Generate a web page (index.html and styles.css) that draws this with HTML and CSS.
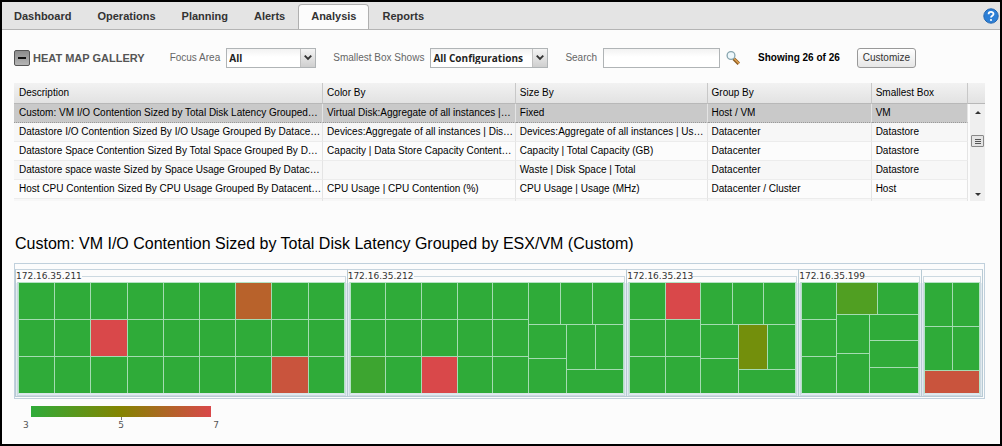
FILE: index.html
```html
<!DOCTYPE html>
<html lang="en">
<head>
<meta charset="utf-8">
<title>Heat Map Gallery</title>
<link rel="stylesheet" href="styles.css">
</head>
<body>
<div class="app">
  <header class="topbar">
    <nav class="tabs">
      <a class="tab" href="#">Dashboard</a>
      <a class="tab" href="#">Operations</a>
      <a class="tab" href="#">Planning</a>
      <a class="tab" href="#">Alerts</a>
      <a class="tab active" href="#">Analysis</a>
      <a class="tab" href="#">Reports</a>
    </nav>
    <button class="icon-btn" type="button" aria-label="Help">
      <svg width="16" height="16" viewBox="0 0 16 16">
        <circle cx="8" cy="8" r="7.2" fill="#2c7fd6" stroke="#2567b0"/>
        <path d="M5.6 6.2C5.6 3.2 10.5 3.2 10.5 6C10.5 7.8 8 7.700 8 9.600" fill="none" stroke="#fff" stroke-width="1.800"/>
        <circle cx="8" cy="12" r="1.100" fill="#fff"/>
      </svg>
    </button>
  </header>

  <main class="content">
    <form class="toolbar">
      <div class="heading">
        <button class="collapse" type="button" aria-label="Collapse gallery"><span class="minus"></span></button>
        <h1 class="gallery-title">HEAT MAP GALLERY</h1>
      </div>
      <div class="field">
        <label for="focus">Focus Area</label>
        <span class="combo combo-small">
          <select id="focus"><option>All</option></select>
          <svg class="arrow" width="15" height="18" viewBox="0 0 15 18"><path d="M4 6.500L7.500 10L11 6.500" fill="none" stroke="#333" stroke-width="2"/></svg>
        </span>
      </div>
      <div class="field">
        <label for="box">Smallest Box Shows</label>
        <span class="combo combo-large">
          <select id="box"><option>All Configurations</option></select>
          <svg class="arrow" width="15" height="18" viewBox="0 0 15 18"><path d="M4 6.500L7.500 10L11 6.500" fill="none" stroke="#333" stroke-width="2"/></svg>
        </span>
      </div>
      <div class="field">
        <label for="search">Search</label>
        <input id="search" class="search" type="text">
        <button class="icon-btn" type="button" aria-label="Run search">
          <svg width="15" height="16" viewBox="0 0 15 16">
            <path d="M7.500 8.500L12.800 13.800" stroke="#8a5a20" stroke-width="3.400"/>
            <path d="M8 8.500L13 13.500" stroke="#e0a050" stroke-width="1.600"/>
            <circle cx="5" cy="5.500" r="3.900" fill="#eef8fc" stroke="#86a4ae" stroke-width="1.300"/>
          </svg>
        </button>
      </div>
      <strong class="count">Showing 26 of 26</strong>
      <button class="customize" type="button">Customize</button>
    </form>

    <div class="grid-panel">
      <div class="grid-main">
      <table class="gallery">
        <colgroup><col class="c-desc"><col class="c-color"><col class="c-size"><col class="c-group"><col class="c-box"></colgroup>
        <thead>
          <tr><th>Description</th><th>Color By</th><th>Size By</th><th>Group By</th><th>Smallest Box</th></tr>
        </thead>
        <tbody>
          <tr class="selected"><td>Custom: VM I/O Contention Sized by Total Disk Latency Grouped…</td><td>Virtual Disk:Aggregate of all instances |…</td><td>Fixed</td><td>Host / VM</td><td>VM</td></tr>
          <tr><td>Datastore I/O Contention Sized By I/O Usage Grouped By Datace…</td><td>Devices:Aggregate of all instances | Dis…</td><td>Devices:Aggregate of all instances | Us…</td><td>Datacenter</td><td>Datastore</td></tr>
          <tr><td>Datastore Space Contention Sized By Total Space Grouped By D…</td><td>Capacity | Data Store Capacity Content…</td><td>Capacity | Total Capacity (GB)</td><td>Datacenter</td><td>Datastore</td></tr>
          <tr><td>Datastore space waste Sized by Space Usage Grouped By Datac…</td><td></td><td>Waste | Disk Space | Total</td><td>Datacenter</td><td>Datastore</td></tr>
          <tr><td>Host CPU Contention Sized By CPU Usage Grouped By Datacent…</td><td>CPU Usage | CPU Contention (%)</td><td>CPU Usage | Usage (MHz)</td><td>Datacenter / Cluster</td><td>Host</td></tr>
          <tr><td></td><td></td><td></td><td></td><td></td></tr>
        </tbody>
      </table>
      </div>
      <div class="side">
        <div class="side-head"></div>
        <div class="track">
          <svg width="6" height="3" viewBox="0 0 6 3"><path d="M0 3L3 0L6 3Z" fill="#333"/></svg>
          <span class="thumb"><i></i><i></i><i></i></span>
          <svg class="down" width="6" height="3" viewBox="0 0 6 3"><path d="M0 0L3 3L6 0Z" fill="#333"/></svg>
        </div>
      </div>
    </div>

    <h2 class="map-title">Custom: VM I/O Contention Sized by Total Disk Latency Grouped by ESX/VM (Custom)</h2>

    <section class="heatmap">
      <div class="host">
        <fieldset>
          <legend>172.16.35.211</legend>
          <div class="tiles">
            <div class="col">
              <div class="row"><i></i><i></i><i></i><i></i><i></i><i></i><i class="rust"></i><i></i><i></i></div>
              <div class="row"><i></i><i></i><i class="red"></i><i></i><i></i><i></i><i></i><i></i><i></i></div>
              <div class="row"><i></i><i></i><i></i><i></i><i></i><i></i><i></i><i class="brick"></i><i></i></div>
            </div>
          </div>
        </fieldset>
      </div>
      <div class="host">
        <fieldset>
          <legend>172.16.35.212</legend>
          <div class="tiles">
            <div class="col five-wide">
              <div class="row"><i></i><i></i><i></i><i></i><i></i></div>
              <div class="row"><i></i><i></i><i></i><i></i><i></i></div>
              <div class="row"><i class="leaf"></i><i></i><i class="red"></i><i></i><i></i></div>
            </div>
            <div class="col mixed">
              <div class="row upper"><i></i><i></i><i></i></div>
              <div class="row lower">
                <div class="col stack"><i></i><i></i></div>
                <div class="col block">
                  <div class="row pair"><i></i><i></i></div>
                  <div class="row base"><i></i></div>
                </div>
              </div>
            </div>
          </div>
        </fieldset>
      </div>
      <div class="host">
        <fieldset>
          <legend>172.16.35.213</legend>
          <div class="tiles">
            <div class="col two-wide">
              <div class="row"><i></i><i class="red"></i></div>
              <div class="row"><i></i><i></i></div>
              <div class="row"><i></i><i></i></div>
            </div>
            <div class="col mixed">
              <div class="row upper"><i></i><i></i><i></i></div>
              <div class="row lower">
                <div class="col stack"><i></i><i></i></div>
                <div class="col block">
                  <div class="row pair"><i class="olive"></i><i></i></div>
                  <div class="row base"><i></i></div>
                </div>
              </div>
            </div>
          </div>
        </fieldset>
      </div>
      <div class="host">
        <fieldset>
          <legend>172.16.35.199</legend>
          <div class="tiles">
            <div class="col one-wide"><i></i><i></i><i></i></div>
            <div class="col rest">
              <div class="row short"><i class="moss"></i><i></i></div>
              <div class="row tall">
                <div class="col slim"><i></i><i></i></div>
                <div class="col wide"><i></i><i></i><i></i></div>
              </div>
            </div>
          </div>
        </fieldset>
      </div>
      <div class="host">
        <fieldset>
          <legend></legend>
          <div class="tiles">
            <div class="col">
              <div class="row quad"><i></i><i></i></div>
              <div class="row quad"><i></i><i></i></div>
              <div class="row strip"><i class="brick"></i></div>
            </div>
          </div>
        </fieldset>
      </div>
    </section>

    <div class="scale">
      <div class="scale-bar"></div>
      <div class="scale-tick"></div>
      <div class="scale-labels"><span>3</span><span>5</span><span>7</span></div>
    </div>
  </main>
</div>
</body>
</html>
```
FILE: styles.css
```css
* { box-sizing: border-box; }
html { height: 100%; }
body {
  margin: 0;
  min-height: 100%;
  display: flex;
  background: #fcfcfc;
  color: #000;
  font: 10px/12px "Liberation Sans", Arial, sans-serif;
}
button, input, select { font: inherit; margin: 0; }
.app {
  flex: 1;
  min-width: 0;
  min-height: 100vh;
  border: 2px solid #000;
}

/* Top navigation */
.topbar {
  display: flex;
  align-items: center;
  justify-content: space-between;
  height: 28px;
  padding-right: 1px;
  background: #e4e4e4;
  border-bottom: 1px solid #b4b4b4;
}
.tabs {
  display: flex;
  align-self: flex-end;
}
.tab {
  height: 25px;
  padding: 0 12px;
  border: 1px solid transparent;
  border-bottom: 0;
  border-radius: 4px 4px 0 0;
  color: #333;
  font-size: 11px;
  font-weight: bold;
  line-height: 22px;
  text-decoration: none;
}
.tab:first-child { padding-left: 11px; }
.tab.active {
  background: #fcfcfc;
  border-color: #b0b0b0;
}
.icon-btn {
  display: flex;
  padding: 0;
  border: 0;
  background: none;
}

/* Filters */
.content { padding: 0 15px 0 12px; }
.toolbar {
  display: flex;
  align-items: center;
  gap: 17px;
  height: 53px;
  padding-top: 2px;
}
.heading {
  display: flex;
  align-items: center;
  gap: 3px;
  margin-right: 8px;
}
.collapse {
  display: flex;
  align-items: center;
  justify-content: center;
  width: 16px;
  height: 16px;
  padding: 0;
  border: 1px solid #555;
  border-radius: 2px;
  background: linear-gradient(#8c8c8c, #b4b4b4);
}
.minus { width: 8px; height: 2px; background: #111; }
.gallery-title {
  margin: 0;
  color: #555;
  font-size: 11px;
  white-space: nowrap;
}
.field {
  display: flex;
  align-items: center;
  gap: 6px;
  color: #666;
  white-space: nowrap;
}
.combo { position: relative; display: flex; height: 20px; }
.combo-small { width: 90px; }
.combo-large { width: 118px; }
.combo select {
  width: 100%;
  padding: 0 17px 0 2px;
  border: 1px solid #b0b4b6;
  border-radius: 0;
  appearance: none;
  background: linear-gradient(#f2f2f2, #fff 8px);
  color: #222;
  font-family: "Open Sans", "Noto Sans", sans-serif;
  font-weight: bold;
}
.arrow {
  position: absolute;
  top: 1px;
  right: 1px;
  background: linear-gradient(#f4f4f4, #cfcfcf);
  border-left: 1px solid #c0c0c0;
  pointer-events: none;
}
.search {
  width: 117px;
  height: 20px;
  border: 1px solid #b0b4b6;
  background: linear-gradient(#f2f2f2, #fff 8px);
}
.count { white-space: nowrap; }
.customize {
  height: 20px;
  padding: 0 5px;
  border: 1px solid #999;
  border-radius: 3px;
  background: linear-gradient(#fff, #e6e6e6);
  color: #333;
}

/* Gallery table */
.grid-panel {
  display: flex;
  height: 118px;
  overflow: hidden;
}
.grid-main { flex: 1; min-width: 0; }
.gallery {
  width: 100%;
  table-layout: fixed;
  border-collapse: separate;
  border-spacing: 0;
}
.c-desc { width: 32.4%; }
.c-color { width: 20.2%; }
.c-size { width: 20.1%; }
.c-group { width: 17.2%; }
.c-box { width: 10.1%; }
.gallery th, .gallery td {
  height: 19px;
  padding: 0 0 0 4px;
  border-right: 1px solid #e4e4e4;
  border-bottom: 1px solid #ececec;
  overflow: hidden;
  text-align: left;
  text-overflow: ellipsis;
  white-space: nowrap;
}
.gallery th:first-child, .gallery td:first-child { padding-left: 5px; }
.gallery th, .side-head {
  height: 21px;
  background: linear-gradient(#f2f2f2, #e2e2e2);
  border-right: 1px solid #c8c8c8;
  border-bottom: 1px solid #b8b8b8;
  font-weight: normal;
}
.gallery tbody tr:nth-child(even) { background: #f7f7f7; }
.gallery tbody .selected { background: #c9c9c9; }
.gallery .selected td { border-bottom: 1px dotted #999; }
.side { width: 17px; display: flex; flex-direction: column; }
.side .side-head { border-right: 0; }
.track {
  flex: 1;
  display: flex;
  flex-direction: column;
  align-items: center;
  margin-left: 2px;
  padding: 7px 0 5px;
  background: #efefef;
}
.thumb {
  display: flex;
  flex-direction: column;
  align-items: center;
  justify-content: center;
  gap: 1px;
  width: 13px;
  height: 12px;
  margin-top: 21px;
  border: 1px solid #888;
  border-radius: 1px;
  background: #e4e4e4;
}
.thumb i { width: 6px; height: 1px; background: #555; }
.down { margin-top: auto; }

/* Heat map */
.map-title {
  margin: 33px 0 9px 1px;
  font-size: 16px;
  font-weight: normal;
  line-height: 20px;
}
.heatmap {
  display: grid;
  grid-template-columns:
    minmax(0, 332fr) minmax(0, 280fr) minmax(0, 172fr)
    minmax(0, 123fr) minmax(0, 62fr);
  border: 1px solid #c0d0dc;
  padding: 5px 1px 1px 0;
}
.host {
  padding: 0 1px;
  border-top: 1px solid #c6d4de;
  border-left: 1px solid #b8cad4;
  border-bottom: 1px solid #b8cad4;
  background: linear-gradient(#fcfcfc 13px, #e2ebf0 13px);
}
.host:last-child { border-right: 1px solid #b8cad4; }
fieldset {
  min-width: 0;
  margin: 0;
  padding: 0 0 1px;
  border: 1px solid #ccd9e1;
}
legend {
  height: 12px;
  margin-left: -2px;
  padding: 0;
  background: #fcfcfc;
  color: #333;
  font: 9px/12px "DejaVu Sans", sans-serif;
}
.tiles {
  display: flex;
  gap: 1px;
  height: 112px;
  border: 1px solid #b4e2c4;
  border-bottom-color: #d9e6ea;
  background: #a4dcb2;
}
.row, .col {
  display: flex;
  flex: 1 1 0;
  gap: 1px;
  min-width: 0;
  min-height: 0;
}
.col { flex-direction: column; }
.tiles i {
  flex: 1 1 0;
  background: #2fab39;
}
.tiles .rust { background: #b8622b; }
.tiles .red { background: #d9484a; }
.tiles .brick { background: #c9543d; }
.tiles .leaf { background: #3da530; }
.tiles .olive { background: #738f0c; }
.tiles .moss { background: #509f22; }
.five-wide { flex-grow: 178; }
.two-wide { flex-grow: 70; }
.mixed { flex-grow: 95; }
.upper { flex-grow: 41; }
.lower { flex-grow: 69; }
.stack { flex-grow: 38; }
.block { flex-grow: 57; }
.pair { flex-grow: 45; }
.base { flex-grow: 23; }
.one-wide { flex-grow: 34; }
.rest { flex-grow: 82; }
.short { flex-grow: 31; }
.tall { flex-grow: 79; }
.slim { flex-grow: 33; }
.wide { flex-grow: 49; }
.quad { flex-grow: 2; }
.strip { flex-grow: 1; }

/* Colour scale */
.scale {
  width: 196px;
  margin: 7px 0 0 9px;
}
.scale-bar {
  height: 11px;
  margin: 0 8px;
  background: linear-gradient(90deg, #2fab39, #848400 50%, #d9484a);
}
.scale-tick {
  width: 1px;
  height: 3px;
  margin: 0 auto;
  background: #777;
}
.scale-labels {
  display: flex;
  justify-content: space-between;
  color: #555;
  font: 9px/10px "DejaVu Sans", sans-serif;
}
```
